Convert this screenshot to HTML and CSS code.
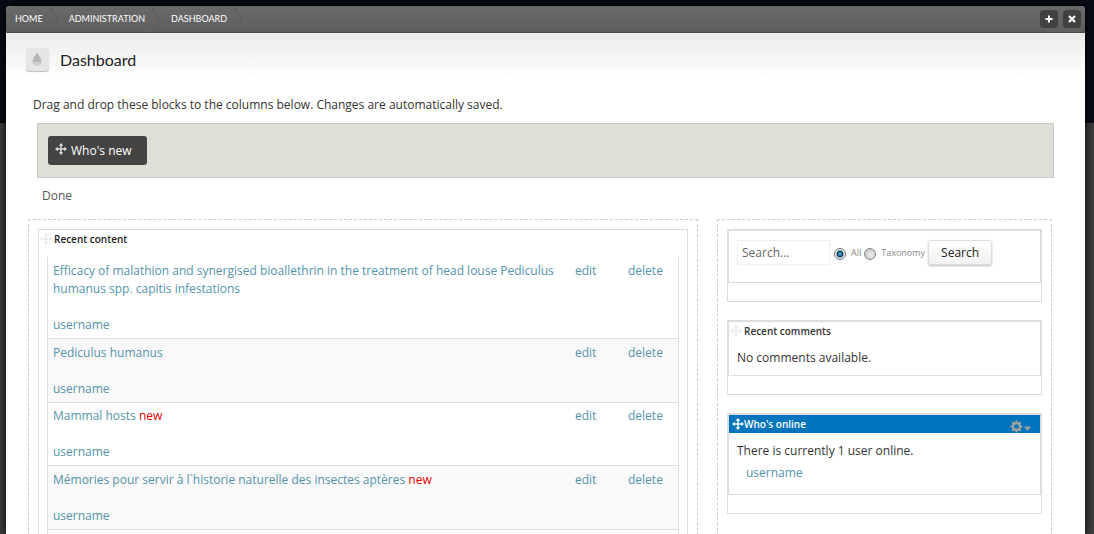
FILE: index.html
```
<!DOCTYPE html>
<html lang="en">
<head>
<meta charset="utf-8">
<title>Dashboard</title>
<link rel="stylesheet" href="styles.css">
</head>
<body>
<svg class="sprite" aria-hidden="true">
  <symbol id="move" viewBox="0 0 12 12">
    <path d="M6 1V11M1 6H11" stroke="currentColor" stroke-width="1.400"/>
    <path d="M6 0L8.300 2.800H3.700ZM6 12L3.700 9.200H8.300ZM0 6L2.800 3.700V8.300ZM12 6L9.200 8.300V3.700Z" fill="currentColor"/>
  </symbol>
  <symbol id="crumb" viewBox="0 0 10 26">
    <path d="M1 0L9 13L1 26" fill="none" stroke="#565656"/>
    <path d="M0 0L8 13L0 26" fill="none" stroke="#6b6b6b"/>
  </symbol>
</svg>
<div class="overlay">
  <header class="topbar">
    <nav class="crumbs" aria-label="Breadcrumb">
      <a href="#">HOME</a><svg class="crumb-sep"><use href="#crumb"/></svg>
      <a href="#">ADMINISTRATION</a><svg class="crumb-sep"><use href="#crumb"/></svg>
      <a href="#">DASHBOARD</a><svg class="crumb-sep"><use href="#crumb"/></svg>
    </nav>
    <button class="tool" type="button" aria-label="Add to shortcuts"><svg viewBox="0 0 18 18"><path d="M9 5.500V12.500M5.500 9H12.500" stroke="#fff" stroke-width="2"/></svg></button>
    <button class="tool" type="button" aria-label="Close"><svg viewBox="0 0 18 18"><path d="M6 6L12 12M12 6L6 12" stroke="#fff" stroke-width="2.200"/></svg></button>
  </header>
  <div class="title-row">
    <span class="title-icon"><svg viewBox="0 0 24 24"><path d="M11.500 4.500C12.500 8 16 10 16 13.800A4.500 4.500 0 0 1 7 13.800C7 10 10.500 8 11.500 4.500Z" fill="#b6b6b6"/><path d="M8.200 14.500H14.800A3.300 3.300 0 0 1 8.200 14.500Z" fill="#cecece"/></svg></span>
    <h1>Dashboard</h1>
  </div>
  <main class="content">
    <p class="hint">Drag and drop these blocks to the columns below. Changes are automatically saved.</p>
    <div class="available">
      <div class="chip"><svg class="move"><use href="#move"/></svg>Who's new</div>
    </div>
    <a class="done" href="#">Done</a>
    <div class="columns">
      <section class="region">
        <div class="panel">
          <h2 class="panel-title"><svg class="move faint"><use href="#move"/></svg>Recent content</h2>
          <table class="recent">
            <tbody>
              <tr><td><a href="#">Efficacy of malathion and synergised bioallethrin in the treatment of head louse Pediculus humanus spp. capitis infestations</a><a class="author" href="#">username</a></td><td class="edit"><a href="#">edit</a></td><td class="delete"><a href="#">delete</a></td></tr>
              <tr><td><a href="#">Pediculus humanus</a><a class="author" href="#">username</a></td><td class="edit"><a href="#">edit</a></td><td class="delete"><a href="#">delete</a></td></tr>
              <tr><td><a href="#">Mammal hosts</a> <span class="new">new</span><a class="author" href="#">username</a></td><td class="edit"><a href="#">edit</a></td><td class="delete"><a href="#">delete</a></td></tr>
              <tr><td><a href="#">Mémories pour servir à l`historie naturelle des insectes aptères</a> <span class="new">new</span><a class="author" href="#">username</a></td><td class="edit"><a href="#">edit</a></td><td class="delete"><a href="#">delete</a></td></tr>
              <tr><td></td><td></td><td></td></tr>
            </tbody>
          </table>
        </div>
      </section>
      <aside class="region side">
        <section class="block">
          <div class="block-inner">
            <form class="search">
              <input class="search-text" type="text" placeholder="Search..." aria-label="Search">
              <label><input type="radio" name="scope" checked>All</label>
              <label><input type="radio" name="scope">Taxonomy</label>
              <button class="search-go" type="button">Search</button>
            </form>
          </div>
        </section>
        <section class="block">
          <div class="block-inner">
            <h2 class="block-title"><svg class="move faint"><use href="#move"/></svg>Recent comments</h2>
            <p class="block-text">No comments available.</p>
          </div>
        </section>
        <section class="block">
          <div class="block-inner">
            <h2 class="block-title active"><svg class="move"><use href="#move"/></svg>Who's online
              <button class="gear" type="button" aria-label="Configure"><svg viewBox="0 0 22 13"><g fill="none" stroke="#a0a0a0"><circle cx="6.500" cy="6.500" r="3.500" stroke-width="2.400"/><path d="M6.500 0.500V3M6.500 10V12.500M0.500 6.500H3M10 6.500H12.500M2.300 2.300L4 4M9 9L10.700 10.700M2.300 10.700L4 9M9 4L10.700 2.300" stroke-width="2.200"/></g><path d="M14 6.500H21L17.500 11Z" fill="#a0a0a0"/></svg></button>
            </h2>
            <div class="block-text">There is currently 1 user online.
              <ul class="users"><li><a href="#">username</a></li></ul>
            </div>
          </div>
        </section>
      </aside>
    </div>
  </main>
</div>
</body>
</html>
```
FILE: styles.css
```
* { box-sizing: border-box; }
body {
  margin: 0;
  height: 100vh;
  padding: 6px 9px 0 6px;
  overflow: hidden;
  background: linear-gradient(#080c14 123px, #3d3d3d 123px);
  font: 12px/18px "Open Sans", "Trebuchet MS", sans-serif;
  color: #333;
}
h1, h2, p, ul { margin: 0; padding: 0; }
a { color: #5294aa; text-decoration: none; }
button { font: inherit; border: 0; padding: 0; }
.sprite { position: absolute; width: 0; height: 0; }

.overlay {
  height: 100%;
  overflow: hidden;
  background: #fff;
  border-radius: 4px 4px 0 0;
  box-shadow: 0 0 8px #000;
}
.topbar {
  display: flex;
  align-items: center;
  gap: 5px;
  height: 27px;
  padding-right: 4px;
  background: linear-gradient(#696969, #5e5e5e);
  border-bottom: 1px solid #4c4c4c;
}
.crumbs { display: flex; flex: 1; align-items: center; padding-left: 9px; }
.crumbs a { color: #fff; font: 9px/26px Lato, sans-serif; }
.crumb-sep { width: 10px; height: 26px; margin: 0 11px 0 5px; }
.tool { width: 18px; height: 18px; border-radius: 4px; background: #414141; }
.tool svg { display: block; }

.title-row {
  display: flex;
  align-items: center;
  gap: 11px;
  height: 53px;
  padding-left: 20px;
  background: linear-gradient(#ebebeb, #fff 46px);
}
.title-icon {
  width: 23px;
  height: 23px;
  border-radius: 4px;
  background: #e6e6e6;
  box-shadow: 0 1px 1px #bbb;
}
.title-icon svg { display: block; }
h1 { font: 16px/24px Lato, sans-serif; color: #222; }

.content { padding: 10px 31px 0 22px; }
.hint { padding-left: 5px; }
.available {
  margin: 9px 0 0 9px;
  padding: 12px 10px;
  background: #dfdfd8;
  border: 1px solid #c8c8c4;
}
.chip {
  display: inline-flex;
  vertical-align: top;
  align-items: center;
  gap: 4px;
  height: 29px;
  padding: 0 15px 0 7px;
  background: #444;
  border-radius: 3px;
  color: #fff;
}
.chip .move { margin-bottom: 4px; color: #ddd; }
.move { width: 12px; height: 12px; flex: none; }
.move.faint { color: #ececec; }
.done { display: block; margin: 9px 14px; color: #555; }

.columns { display: grid; grid-template-columns: 2fr 1fr; gap: 19px; margin: 14px 2px 0 0; }
.region { padding: 9px; border: 1px dashed #ccc; }
.panel { border: 1px solid #ddd; padding: 0 8px; }
.panel-title, .block-title {
  display: flex;
  align-items: center;
  gap: 2px;
  font: 600 10px/18px "Open Sans", sans-serif;
}
.panel-title { margin-left: -8px; padding-left: 1px; color: #222; }
.recent {
  width: 100%;
  margin-top: 9px;
  border-collapse: separate;
  border-spacing: 0;
  border: solid #ddd;
  border-width: 0 1px;
}
.recent td { padding: 4px 5px; vertical-align: top; border-bottom: 1px solid #ddd; }
.recent tr:first-child td { padding-top: 5px; }
.recent tr:nth-child(even) { background: #f9f9f9; }
.recent tr:nth-child(even) td { padding-top: 5px; }
.recent tr:last-child td { height: 64px; }
.author { display: block; width: max-content; margin-top: 18px; }
.recent .edit { width: 53px; }
.recent .delete { width: 55px; }
.new { color: #e00000; }

.side { display: flex; flex-direction: column; gap: 18px; }
.block { border: 1px solid #ddd; padding-bottom: 18px; }
.block-inner { border: 1px solid #ddd; }
.block-title { padding-left: 1px; }
.block-title.active { background: #0074bd; color: #fff; padding-left: 3px; gap: 0; }
.gear { width: 22px; height: 13px; margin: 4px 8px 0 auto; background: none; }
.gear svg { display: block; }
.block-text { padding: 9px 8px 8px; }
.users { margin: 4px 0 4px 9px; list-style: none; }
.search { display: flex; align-items: center; padding: 9px 8px 17px; }
.search-text {
  width: 93px;
  height: 25px;
  margin-right: 4px;
  padding: 0 4px;
  border: 1px solid #eee;
  font: inherit;
}
.search-text::placeholder { color: #666; opacity: 1; }
.search label { display: flex; align-items: center; gap: 5px; margin-right: 3px; font-size: 9px; color: #888; }
.search input[type="radio"] {
  appearance: none;
  width: 12px;
  height: 12px;
  margin: 3px 0 0;
  border: 1px solid #888;
  border-radius: 50%;
  background: radial-gradient(circle at 60% 60%, #eee, #bbb);
}
.search input[type="radio"]:checked {
  border-color: #777;
  background: radial-gradient(circle, #5cc3ea 0, #0b3a5c 3px, #eef3f6 4px);
}
.search-go {
  width: 64px;
  height: 25px;
  border: 1px solid #ddd;
  border-radius: 3px;
  background: linear-gradient(#fff, #f2f2f2);
  box-shadow: 0 1px 2px #bbb;
  color: #222;
}
```
